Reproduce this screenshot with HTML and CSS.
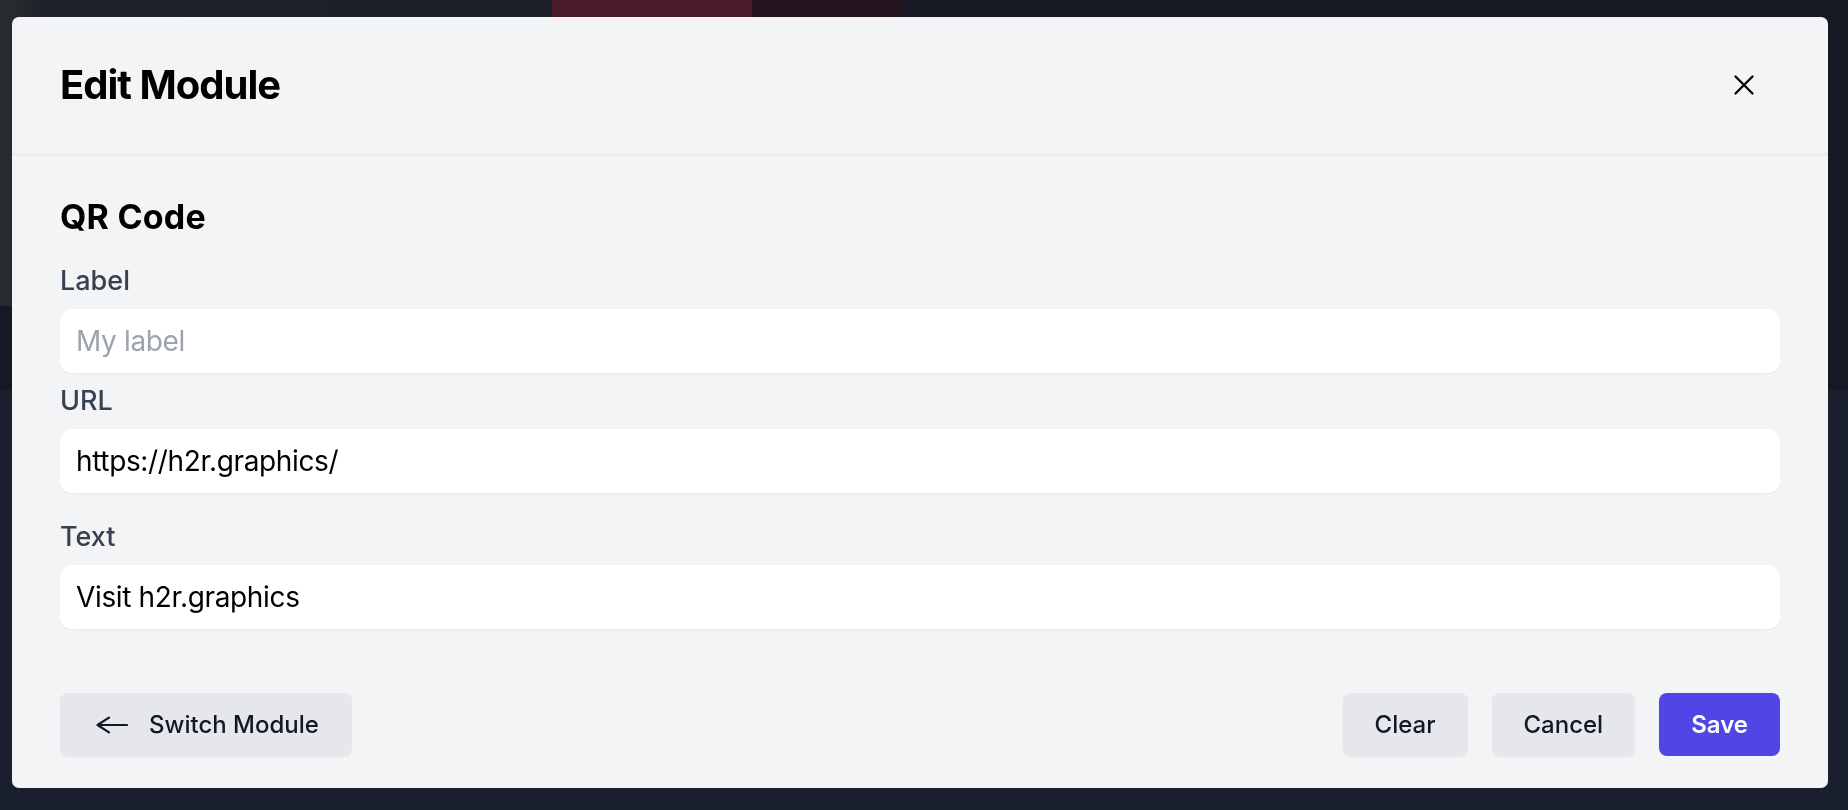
FILE: index.html
```html
<!DOCTYPE html>
<html lang="en">
<head>
<meta charset="utf-8">
<title>Edit Module</title>
<link rel="stylesheet" href="styles.css">
</head>
<body>
<div class="page">
  <div class="hero">
    <div class="hero-art"></div>
    <div class="hero-red"></div>
    <div class="hero-maroon"></div>
  </div>
  <div class="page-rest"></div>
</div>

<div class="overlay">
  <div class="modal">
    <header class="modal-header">
      <h1 class="modal-title">Edit Module</h1>
      <button class="close-btn" type="button" aria-label="Close">
        <svg width="20" height="20" viewBox="0 0 20 20" fill="none" stroke="#000" stroke-width="2.3" stroke-linecap="round"><path d="M1.5 1.5 18.5 18.5M18.5 1.5 1.5 18.5"/></svg>
      </button>
    </header>
    <div class="modal-body">
      <h2 class="section-title">QR Code</h2>
      <div class="field">
        <label class="field-label">Label</label>
        <input class="field-input" type="text" placeholder="My label">
      </div>
      <div class="field">
        <label class="field-label">URL</label>
        <input class="field-input" type="text" value="https://h2r.graphics/">
      </div>
      <div class="field field-spaced">
        <label class="field-label">Text</label>
        <input class="field-input" type="text" value="Visit h2r.graphics">
      </div>
      <div class="actions">
        <button class="btn btn-gray btn-switch" type="button">
          <svg width="32" height="18" viewBox="0 0 32 18" fill="none" stroke="#111827" stroke-width="2.2" stroke-linecap="round" stroke-linejoin="round"><path d="M1.5 9H31M13 1.6 1.5 9 13 16.4"/></svg>
          <span>Switch Module</span>
        </button>
        <div class="actions-right">
          <button class="btn btn-gray" type="button">Clear</button>
          <button class="btn btn-gray" type="button">Cancel</button>
          <button class="btn btn-primary" type="button">Save</button>
        </div>
      </div>
    </div>
  </div>
</div>
</body>
</html>
```

FILE: styles.css
```css
* { box-sizing: border-box; }

html, body {
  margin: 0;
  padding: 0;
  height: 100%;
}

body {
  font-family: Inter, "Noto Sans", "Liberation Sans", sans-serif;
  background: #1a1f2e;
  overflow: hidden;
}

.page {
  height: 100%;
  display: flex;
  flex-direction: column;
}

.hero {
  position: relative;
  height: 390px;
  background: #161923;
  flex: none;
}

.hero-art {
  position: absolute;
  left: 0;
  top: 0;
  width: 552px;
  height: 306px;
  background: linear-gradient(90deg, #2a2c30 0%, #1e2329 8%, #1c2129 60%, #1a1f27 100%);
}

.hero-red {
  position: absolute;
  left: 552px;
  top: 0;
  width: 200px;
  height: 120px;
  background: #4a1c2b;
}

.hero-maroon {
  position: absolute;
  left: 752px;
  top: 0;
  width: 150px;
  height: 120px;
  background: #24141d;
}

.page-rest {
  flex: 1;
  background: #1a1f2e;
}

.overlay {
  position: fixed;
  inset: 0;
  padding: 17px 20px 22px 12px;
}

.modal {
  width: 1816px;
  background: #f3f4f6;
  border-radius: 7px;
  overflow: hidden;
}

.modal-header {
  height: 139px;
  padding: 0 48px;
  display: flex;
  align-items: center;
  justify-content: space-between;
  border-bottom: 3px solid #eaecef;
}

.modal-title {
  margin: 0;
  font-size: 40px;
  line-height: 48px;
  font-weight: 700;
  color: #000;
  letter-spacing: -1px;
}

.close-btn {
  width: 72px;
  height: 72px;
  padding: 0;
  border: 0;
  background: transparent;
  display: flex;
  align-items: center;
  justify-content: center;
}

.modal-body {
  padding: 41px 48px 32px;
  display: flex;
  flex-direction: column;
}

.section-title {
  margin: 0 0 26px;
  font-size: 34px;
  line-height: 40px;
  font-weight: 700;
  color: #000;
  letter-spacing: 0.2px;
}

.field {
  display: flex;
  flex-direction: column;
  gap: 10px;
}

.field + .field {
  margin-top: 10px;
}

.field + .field-spaced {
  margin-top: 26px;
}

.field-label {
  font-size: 27px;
  line-height: 36px;
  font-weight: 500;
  color: #374151;
}

.field-input {
  height: 64px;
  width: 100%;
  border: 0;
  border-radius: 12px;
  background: #fff;
  padding: 0 16px;
  font-family: inherit;
  font-size: 28px;
  letter-spacing: -0.35px;
  color: #000;
  box-shadow: 0 1px 2px rgba(0, 0, 0, 0.06);
  outline: none;
}

.field-input::placeholder {
  color: #9ca3af;
}

.actions {
  margin-top: 64px;
  display: flex;
  justify-content: space-between;
  align-items: center;
}

.actions-right {
  display: flex;
  gap: 24px;
}

.btn {
  height: 63px;
  padding: 0 32px;
  border: 0;
  border-radius: 8px;
  font-family: inherit;
  font-size: 24px;
  font-weight: 500;
  display: flex;
  align-items: center;
}

.btn-gray {
  background: #e5e7eb;
  color: #111827;
  box-shadow: 0 1px 2px rgba(0, 0, 0, 0.06);
}

.btn-primary {
  background: #4f46e5;
  color: #fff;
  font-weight: 600;
}

.btn-switch {
  padding: 0 33px 0 36px;
  gap: 21px;
}
```
